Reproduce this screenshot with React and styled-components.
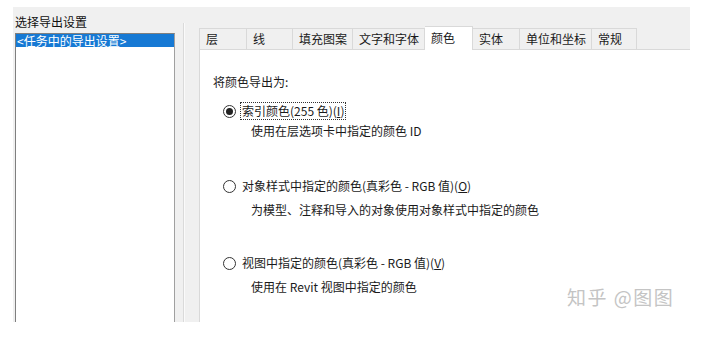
import React from "react";
import styled, { createGlobalStyle } from "styled-components";

const GlobalStyle = createGlobalStyle`
  html, body { margin: 0; padding: 0; background: #ffffff; }
  body {
    font-family: "Noto Sans CJK SC", "Noto Sans", "Liberation Sans", sans-serif;
    color: #1a1a1a;
  }
`;

const Page = styled.div`
  position: relative;
  width: 701px;
  height: 338px;
  overflow: hidden;
  padding: 7px 0 0 13px;
  box-sizing: border-box;
`;

const Dialog = styled.div`
  display: flex;
  width: 677px;
  height: 315px;
  background: #f0f0f0;
  overflow: hidden;
`;

const LeftPane = styled.div`
  display: flex;
  flex-direction: column;
  width: 170px;
  padding: 7px 0 0 2px;
  box-sizing: border-box;
`;

const PaneTitle = styled.div`
  font-size: 12px;
  line-height: 16px;
  height: 16px;
  margin-bottom: 3px;
  color: #111;
  white-space: nowrap;
`;

const ListBox = styled.div`
  width: 160px;
  flex: 1;
  box-sizing: border-box;
  background: #fff;
  border: 1px solid #7f7f7f;
  border-right-color: #a0a0a0;
  border-bottom: none;
`;

const ListItem = styled.div`
  height: 13px;
  line-height: 13px;
  font-size: 12px;
  padding-left: 1px;
  white-space: nowrap;
  background: ${(p) => (p.$selected ? "#1679d4" : "transparent")};
  color: ${(p) => (p.$selected ? "#ffffff" : "#111")};
`;

const Splitter = styled.div`
  width: 1px;
  margin-top: 16px;
  background: #dadada;
  box-shadow: 1px 0 0 #fafafa;
`;

const TabControl = styled.div`
  flex: 1;
  display: flex;
  flex-direction: column;
  margin-left: 15px;
  padding-top: 19px;
`;

const TabStrip = styled.div`
  display: flex;
  align-items: flex-end;
  height: 23px;
`;

const Tab = styled.div`
  box-sizing: border-box;
  width: ${(p) => p.$w}px;
  height: ${(p) => (p.$active ? 24 : 21)}px;
  padding: ${(p) => (p.$active ? "3px 0 0 6px" : "2px 0 0 6px")};
  font-size: 12px;
  line-height: 16px;
  white-space: nowrap;
  color: #1a1a1a;
  background: ${(p) => (p.$active ? "#ffffff" : "#f0f0f0")};
  border: 1px solid #d9d9d9;
  border-bottom: none;
  border-left-width: ${(p) => (p.$first ? 1 : 0)}px;
  margin-bottom: ${(p) => (p.$active ? -1 : 0)}px;
  position: relative;
  z-index: ${(p) => (p.$active ? 1 : 0)};
`;

const TabPanel = styled.div`
  flex: 1;
  background: #ffffff;
  border-top: 1px solid #d9d9d9;
  border-left: 1px solid #d9d9d9;
  padding: 24px 0 0 13px;
  display: flex;
  flex-direction: column;
`;

const Heading = styled.div`
  font-size: 12px;
  line-height: 16px;
  color: #1a1a1a;
`;

const Option = styled.div`
  display: flex;
  flex-direction: column;
  margin-top: ${(p) => p.$top}px;
`;

const RadioRow = styled.div`
  display: flex;
  align-items: center;
  height: 18px;
  margin-left: 10px;
`;

const RadioCircle = styled.span`
  box-sizing: border-box;
  width: 13px;
  height: 13px;
  border-radius: 50%;
  border: 1px solid #333;
  background: #fff;
  display: flex;
  align-items: center;
  justify-content: center;
  flex-shrink: 0;

  &::after {
    content: "";
    display: ${(p) => (p.$checked ? "block" : "none")};
    width: 7px;
    height: 7px;
    border-radius: 50%;
    background: #222;
  }
`;

const RadioLabel = styled.span`
  margin-left: 4px;
  font-size: 12px;
  line-height: 16px;
  padding: 0 1px;
  white-space: nowrap;
  color: #1a1a1a;
  border: 1px dotted ${(p) => (p.$focused ? "#333" : "transparent")};
`;

const Key = styled.span`
  text-decoration: underline;
`;

const Desc = styled.div`
  margin: ${(p) => p.$top}px 0 0 38px;
  font-size: 12px;
  line-height: 16px;
  white-space: nowrap;
  color: #1a1a1a;
`;

const Watermark = styled.div`
  position: absolute;
  left: 567px;
  top: 285px;
  font-size: 19px;
  line-height: 24px;
  letter-spacing: 1.5px;
  color: #c4c4c4;
  white-space: nowrap;
`;

const tabs = [
  { label: "层", w: 48 },
  { label: "线", w: 46 },
  { label: "填充图案", w: 60 },
  { label: "文字和字体", w: 72 },
  { label: "颜色", w: 48, active: true },
  { label: "实体", w: 47 },
  { label: "单位和坐标", w: 72 },
  { label: "常规", w: 45 },
];

export default function App() {
  return (
    <>
      <GlobalStyle />
      <Page>
        <Dialog>
          <LeftPane>
            <PaneTitle>选择导出设置</PaneTitle>
            <ListBox>
              <ListItem $selected>&lt;任务中的导出设置&gt;</ListItem>
            </ListBox>
          </LeftPane>
          <Splitter />
          <TabControl>
            <TabStrip>
              {tabs.map((t, i) => (
                <Tab key={t.label} $w={t.w} $active={t.active} $first={i === 0}>
                  {t.label}
                </Tab>
              ))}
            </TabStrip>
            <TabPanel>
              <Heading>将颜色导出为:</Heading>
              <Option $top={12}>
                <RadioRow>
                  <RadioCircle $checked />
                  <RadioLabel $focused>
                    索引颜色(255 色)(<Key>I</Key>)
                  </RadioLabel>
                </RadioRow>
                <Desc $top={3}>使用在层选项卡中指定的颜色 ID</Desc>
              </Option>
              <Option $top={38}>
                <RadioRow>
                  <RadioCircle />
                  <RadioLabel>
                    对象样式中指定的颜色(真彩色 - RGB 值)(<Key>O</Key>)
                  </RadioLabel>
                </RadioRow>
                <Desc $top={7}>为模型、注释和导入的对象使用对象样式中指定的颜色</Desc>
              </Option>
              <Option $top={36}>
                <RadioRow>
                  <RadioCircle />
                  <RadioLabel>
                    视图中指定的颜色(真彩色 - RGB 值)(<Key>V</Key>)
                  </RadioLabel>
                </RadioRow>
                <Desc $top={7}>使用在 Revit 视图中指定的颜色</Desc>
              </Option>
            </TabPanel>
          </TabControl>
        </Dialog>
        <Watermark>知乎 @图图</Watermark>
      </Page>
    </>
  );
}
